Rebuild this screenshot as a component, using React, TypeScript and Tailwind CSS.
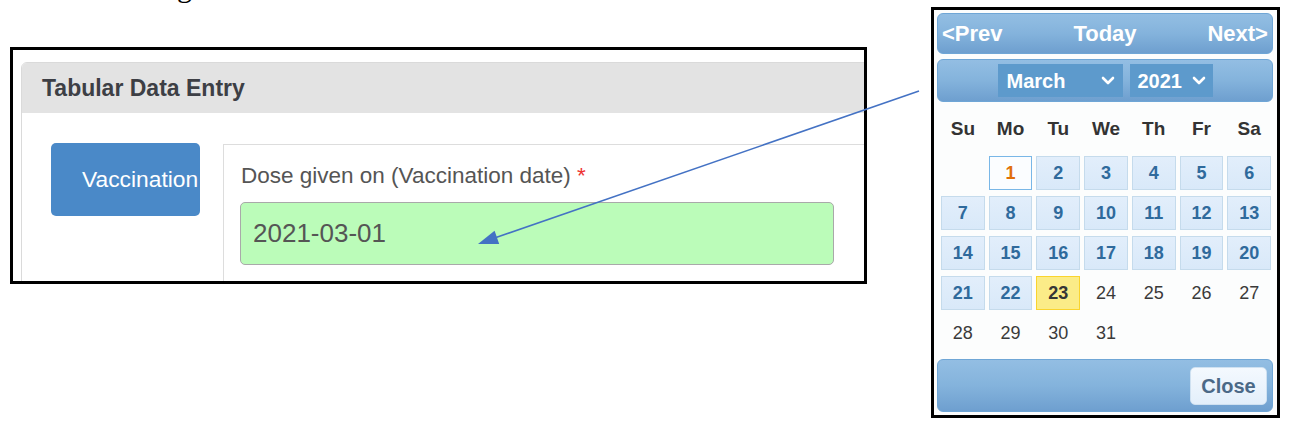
import React from "react";

const Chevron = () => (
  <svg width="14" height="9" viewBox="0 0 14 9" fill="none">
    <polyline points="2,2 7,7 12,2" stroke="white" strokeWidth="2.6" strokeLinecap="round" strokeLinejoin="round" />
  </svg>
);

type Cell = { d: number | null; kind: "norm" | "first" | "today" | "plain" | "empty" };

const rows: Cell[][] = [
  [
    { d: null, kind: "empty" },
    { d: 1, kind: "first" },
    { d: 2, kind: "norm" },
    { d: 3, kind: "norm" },
    { d: 4, kind: "norm" },
    { d: 5, kind: "norm" },
    { d: 6, kind: "norm" },
  ],
  [7, 8, 9, 10, 11, 12, 13].map((d) => ({ d, kind: "norm" as const })),
  [14, 15, 16, 17, 18, 19, 20].map((d) => ({ d, kind: "norm" as const })),
  [
    { d: 21, kind: "norm" },
    { d: 22, kind: "norm" },
    { d: 23, kind: "today" },
    { d: 24, kind: "plain" },
    { d: 25, kind: "plain" },
    { d: 26, kind: "plain" },
    { d: 27, kind: "plain" },
  ],
  [
    { d: 28, kind: "plain" },
    { d: 29, kind: "plain" },
    { d: 30, kind: "plain" },
    { d: 31, kind: "plain" },
    { d: null, kind: "empty" },
    { d: null, kind: "empty" },
    { d: null, kind: "empty" },
  ],
];

function DayCell({ c }: { c: Cell }) {
  if (c.kind === "empty") return <div className="h-[34px]" />;
  if (c.kind === "plain")
    return (
      <div className="h-[34px] flex items-center justify-center text-[18px] text-[#3a3a3a]">{c.d}</div>
    );
  if (c.kind === "first")
    return (
      <div className="h-[34px] flex items-center justify-center border border-[#79b7e7] bg-[#fbfdff] text-[18px] font-bold text-[#e17009]">
        {c.d}
      </div>
    );
  if (c.kind === "today")
    return (
      <div className="h-[34px] flex items-center justify-center border border-[#fad42e] bg-[#fbec88] text-[18px] font-bold text-[#363636]">
        {c.d}
      </div>
    );
  return (
    <div className="h-[34px] flex items-center justify-center border border-[#c5dbec] bg-gradient-to-b from-[#e2eefb] to-[#d9e9f9] text-[18px] font-bold text-[#2f6a9c]">
      {c.d}
    </div>
  );
}

export default function App() {
  const bar =
    "rounded-[6px] border border-[#6fa6d6] bg-gradient-to-b from-[#93bee3] via-[#84b3dc] to-[#6e9fcf]";
  return (
    <div className="relative flex items-start w-[1290px] h-[429px] overflow-hidden bg-white font-['Liberation_Sans',Arial,sans-serif]">
      {/* left screenshot */}
      <div className="ml-[10px] flex flex-col">
        <div className="h-0 pl-[167px]">
          <p className="-mt-[28px] text-[30px] leading-[30px] text-black font-['Liberation_Serif',serif]">g</p>
        </div>
        <div className="mt-[47px] w-[857px] h-[237px] border-[3px] border-black overflow-hidden bg-white">
          <div className="ml-[8px] mt-[12px] w-[900px] h-[300px] border border-[#dadada] rounded-t-[6px] flex flex-col">
            <div className="h-[50px] bg-[#e3e3e3] rounded-t-[5px] flex items-center pl-[20px] text-[23px] font-bold text-[#3d3f45]">
              Tabular Data Entry
            </div>
            <div className="flex items-start pt-[30px] pl-[29px] bg-white flex-1">
              <div className="w-[149px] h-[73px] shrink-0 bg-[#4a89c8] rounded-[5px] pl-[31px] overflow-hidden flex items-center text-white text-[22.8px] whitespace-nowrap">
                Vaccination
              </div>
              <div className="ml-[23px] mt-[1px] h-[200px] flex-1 border border-[#dddddd] pl-[16px] pt-[18px]">
                <div className="ml-[1px] text-[22.5px] leading-[26px] text-[#555555] whitespace-nowrap">
                  Dose given on (Vaccination date) <span className="text-[#ee3333]">*</span>
                </div>
                <div className="mt-[13px] w-[594px] h-[63px] bg-[#bbfcb9] border border-[#a9a9a9] rounded-[5px] pl-[12px] flex items-center text-[26px] text-[#555555]">
                  2021-03-01
                </div>
              </div>
            </div>
          </div>
        </div>
      </div>

      {/* calendar screenshot */}
      <div className="ml-[64px] mt-[7px] w-[349px] h-[411px] border-[3px] border-black bg-[#fcfdfd] pl-[3px] pr-[4px] pt-[3px] flex flex-col">
        <div className={`h-[41px] ${bar} flex items-center justify-between px-[4px] text-white font-bold text-[22px]`}>
          <span>&lt;Prev</span>
          <span>Today</span>
          <span>Next&gt;</span>
        </div>
        <div className={`mt-[5px] h-[43px] ${bar} flex items-center justify-center gap-[7px] text-white font-bold text-[20px]`}>
          <div className="w-[125px] h-[33px] bg-[#5d9acc] flex items-center justify-between pl-[9px] pr-[8px]">
            <span>March</span>
            <Chevron />
          </div>
          <div className="w-[83px] h-[33px] bg-[#5d9acc] flex items-center justify-between pl-[8px] pr-[7px]">
            <span>2021</span>
            <Chevron />
          </div>
        </div>
        <div className="ml-[4px] w-[330px] mt-[10px] h-[34px] grid grid-cols-7 gap-x-[4px] items-center text-[19px] font-bold text-[#333333]">
          {["Su", "Mo", "Tu", "We", "Th", "Fr", "Sa"].map((n) => (
            <div key={n} className="text-center">
              {n}
            </div>
          ))}
        </div>
        <div className="ml-[4px] w-[330px] mt-[10px] grid grid-cols-7 gap-x-[4px] gap-y-[6px]">
          {rows.flat().map((c, i) => (
            <DayCell key={i} c={c} />
          ))}
        </div>
        <div className={`mt-[9px] h-[53px] ${bar} flex items-center justify-end pr-[5px]`}>
          <div className="w-[77px] h-[38px] rounded-[5px] border border-[#cfe1f1] bg-gradient-to-b from-[#f4f9fe] to-[#e3effb] flex items-center justify-center text-[20px] font-bold text-[#4b6987]">
            Close
          </div>
        </div>
      </div>

      {/* annotation arrow */}
      <svg className="absolute inset-0 pointer-events-none" width="1290" height="429" viewBox="0 0 1290 429">
        <line x1="919" y1="91" x2="496" y2="237.5" stroke="#4472c4" strokeWidth="1.5" />
        <polygon points="478,244 499.2,244.1 494.6,230.8" fill="#4472c4" />
      </svg>
    </div>
  );
}
